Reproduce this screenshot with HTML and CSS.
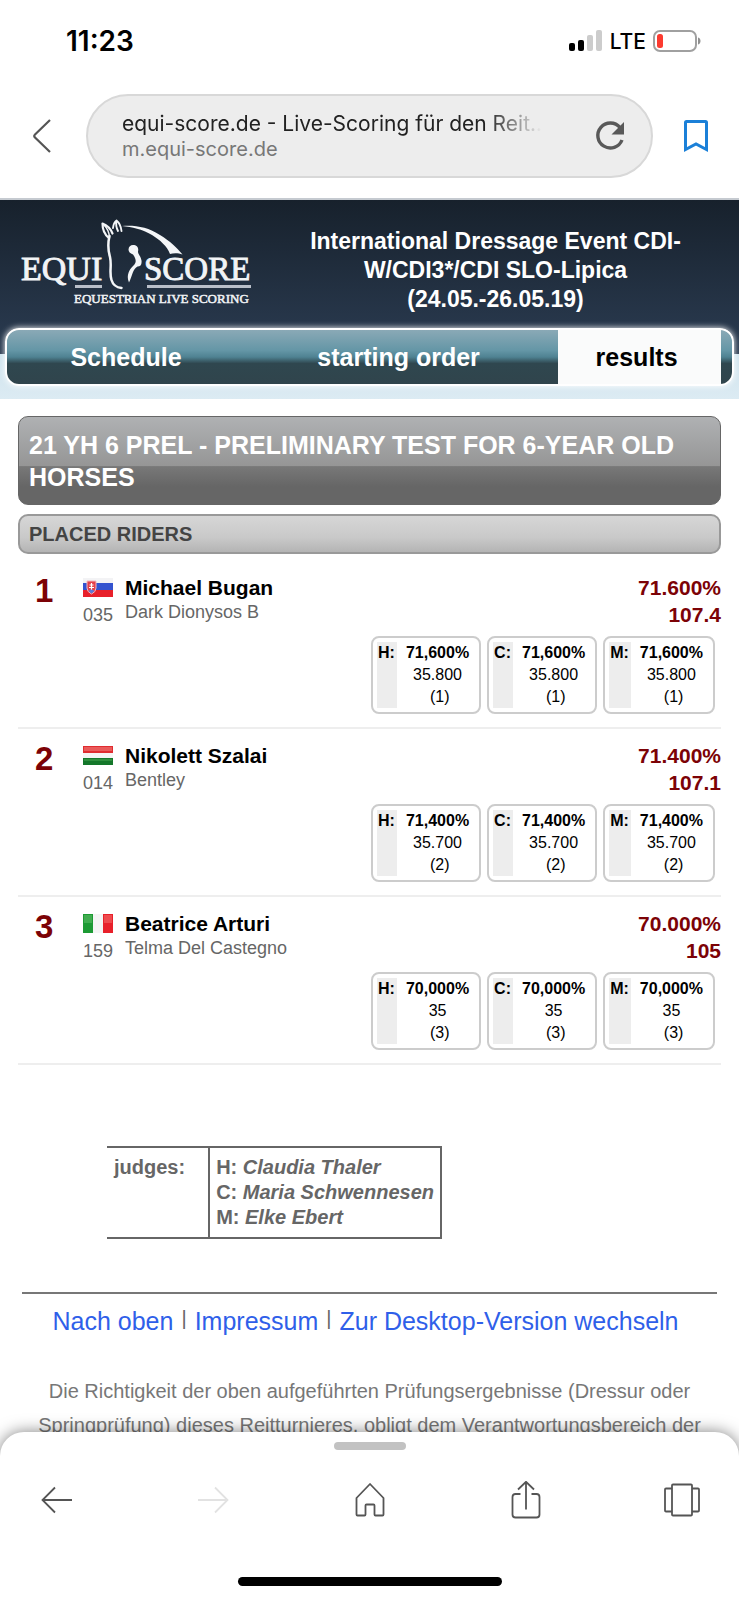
FILE: index.html
```html
<!DOCTYPE html>
<html lang="de">
<head>
<meta charset="utf-8">
<meta name="viewport" content="width=device-width, initial-scale=1">
<title>equi-score.de - Live-Scoring</title>
<link rel="stylesheet" href="styles.css">
</head>
<body>
<div class="phone">
  <div class="chrome">
    <div class="status">
      <span class="clock">11:23</span>
      <div class="status-right">
        <svg width="34" height="22" viewBox="0 0 34 22" aria-hidden="true">
          <rect x="0" y="13" width="6" height="8" rx="2" fill="#000"/>
          <rect x="9" y="10" width="6" height="11" rx="2" fill="#000"/>
          <rect x="18" y="5" width="6" height="16" rx="2" fill="#ccc"/>
          <rect x="27" y="0" width="6" height="21" rx="2" fill="#ccc"/>
        </svg>
        <span class="lte">LTE</span>
        <svg width="48" height="22" viewBox="0 0 48 22" aria-hidden="true">
          <rect x="1" y="1" width="42" height="20" rx="6" fill="none" stroke="#a0a0a0" stroke-width="2"/>
          <rect x="4" y="4" width="6" height="14" rx="2.500" fill="#fc3b30"/>
          <path d="M45 7.500c2 .6 2.500 2 2.500 3.500s-.5 2.900-2.500 3.500z" fill="#8f8f8f"/>
        </svg>
      </div>
    </div>
    <div class="address-row">
      <button class="icon-btn" type="button" aria-label="Zurück">
        <svg width="20" height="36" viewBox="0 0 20 36"><path d="M18 2 3 16.500q-1.500 1.500 0 3L18 34" fill="none" stroke="#555" stroke-width="2.200"/></svg>
      </button>
      <div class="address">
        <div class="address-text">
          <span class="page-title">equi-score.de - Live-Scoring für den Reit..</span>
          <span class="page-host">m.equi-score.de</span>
        </div>
        <button class="icon-btn" type="button" aria-label="Neu laden">
          <svg width="32" height="32" viewBox="0 0 32 32">
            <path d="M26 7.500A12.500 12.500 0 1 0 28 20" fill="none" stroke="#595959" stroke-width="3.400"/>
            <path d="M30 2v12.500H17.500z" fill="#595959"/>
          </svg>
        </button>
      </div>
      <button class="icon-btn bookmark" type="button" aria-label="Lesezeichen">
        <svg width="26" height="34" viewBox="0 0 26 34"><path d="M2.500 3.500q0-1 1-1h19q1 0 1 1v27L13 25 2.500 30.500z" fill="none" stroke="#1b80d8" stroke-width="3"/></svg>
      </button>
    </div>
  </div>

  <div class="site">
    <header class="site-head">
      <div class="banner">
        <svg class="logo" width="236" height="95" viewBox="0 0 236 95" role="img" aria-label="EQUI SCORE">
          <g fill="#f2f4f6" stroke="#f2f4f6" font-family="'Liberation Serif', serif">
            <text x="1" y="65" font-size="34" stroke-width=".9">EQUI</text>
            <text x="124" y="65" font-size="33" stroke-width=".9">SCORE</text>
            <text x="54" y="88" font-size="13" stroke-width=".5">EQUESTRIAN LIVE SCORING</text>
          </g>
          <path d="M55 71.500h27M127 71.500h104" stroke="#b9bfc9" stroke-width="3"/>
          <g fill="none" stroke="#f4f6f8" stroke-linecap="round" stroke-linejoin="round">
            <path d="M89 23c-4-3-6.500-8-6.500-14.500 4 1.500 8 5 10 10" stroke-width="2.200"/>
            <path d="M84 10c3 3 5 7 5.500 12" stroke-width="1.500"/>
            <path d="M93 13c.5-4 1.800-6.500 3.500-7.500 2.500 2 4.500 6 5 10.500M96.500 6c-1 4 0 7 1.500 10" stroke-width="1.900"/>
            <path d="M89.500 21c-2 8-1.500 14 .5 21 2 9-1 15 1.500 23 1.500 5 5 7.500 10 8" stroke-width="2.500"/>
          </g>
          <path d="M102 11c13-1 26 1 38 9 10 6 17 13 22.500 19.500-4-1.500-9-1.500-12.500-.5-3-8-10-14-18-19-10-6-20-8-30-9z" fill="#f4f6f8"/>
          <path d="M113 30c4 0 6 3 5 6.500 0 3 2.500 4 3.500 9 .5 4-1 6-4 6-5 3-5 9-8.500 16-3-6 0-13 4.500-17 3-3 3-6-.5-11-3-1-4.500-3-4.500-5 .2-3 2-4.500 4.500-4.500z" fill="#f4f6f8"/>
        </svg>
        <h1 class="event">International Dressage Event CDI-W/CDI3*/CDI SLO-Lipica<br>(24.05.-26.05.19)</h1>
      </div>
      <nav class="tabs">
        <a href="#schedule">Schedule</a>
        <a href="#starting">starting order</a>
        <a href="#results" class="active" aria-current="page">results</a>
      </nav>
    </header>

    <main class="content" id="results">
      <h2 class="test-title">21 YH 6 PREL - PRELIMINARY TEST FOR 6-YEAR OLD HORSES</h2>
      <h3 class="section-title">PLACED RIDERS</h3>
      <ol class="riders">
        <li class="rider">
          <span class="rank">1</span>
          <div class="entry">
            <svg width="30" height="19" viewBox="0 0 30 19" role="img" aria-label="Slowakei">
              <rect width="30" height="19" fill="#f3f3f5"/><rect y="5" width="30" height="8" fill="#3453cf"/><rect y="12" width="30" height="7" fill="#e8202a"/>
              <path d="M4 3h9v7q0 4-4.500 6Q4 14 4 10z" fill="#e5404a" stroke="#f3b6bd"/><path d="M8.500 5v7M6.500 7h4M6 9.500h5" stroke="#fff" stroke-width="1.200"/><path d="M5.500 13q3-3 6 0l-3 2.500z" fill="#5d78d8"/>
            </svg>
            <span>035</span>
          </div>
          <div class="who"><strong>Michael Bugan</strong><span>Dark Dionysos B</span></div>
          <div class="score"><span>71.600%</span><span>107.4</span></div>
          <div class="marks">
            <div class="mark"><b>H:</b><div><strong>71,600%</strong><span>35.800</span><span>&nbsp;(1)</span></div></div>
            <div class="mark"><b>C:</b><div><strong>71,600%</strong><span>35.800</span><span>&nbsp;(1)</span></div></div>
            <div class="mark"><b>M:</b><div><strong>71,600%</strong><span>35.800</span><span>&nbsp;(1)</span></div></div>
          </div>
        </li>
        <li class="rider">
          <span class="rank">2</span>
          <div class="entry">
            <svg width="30" height="19" viewBox="0 0 30 19" role="img" aria-label="Ungarn">
              <rect width="30" height="19" fill="#f5f5f5"/><rect width="30" height="7" fill="#e02c30"/><rect x="1" y="1" width="28" height="4" fill="#ea5a5a"/><rect y="12" width="30" height="7" fill="#14772a"/><rect x="1" y="13" width="28" height="2" fill="#2f8f3e"/>
            </svg>
            <span>014</span>
          </div>
          <div class="who"><strong>Nikolett Szalai</strong><span>Bentley</span></div>
          <div class="score"><span>71.400%</span><span>107.1</span></div>
          <div class="marks">
            <div class="mark"><b>H:</b><div><strong>71,400%</strong><span>35.700</span><span>&nbsp;(2)</span></div></div>
            <div class="mark"><b>C:</b><div><strong>71,400%</strong><span>35.700</span><span>&nbsp;(2)</span></div></div>
            <div class="mark"><b>M:</b><div><strong>71,400%</strong><span>35.700</span><span>&nbsp;(2)</span></div></div>
          </div>
        </li>
        <li class="rider">
          <span class="rank">3</span>
          <div class="entry">
            <svg width="30" height="19" viewBox="0 0 30 19" role="img" aria-label="Italien">
              <rect width="30" height="19" fill="#f4f4f4"/><rect width="10" height="19" fill="#1d9a34"/><rect x="1" y="1" width="8" height="8" fill="#41ad50"/><rect x="20" width="10" height="19" fill="#e8202a"/><rect x="21" y="1" width="8" height="8" fill="#ee4a4e"/>
            </svg>
            <span>159</span>
          </div>
          <div class="who"><strong>Beatrice Arturi</strong><span>Telma Del Castegno</span></div>
          <div class="score"><span>70.000%</span><span>105</span></div>
          <div class="marks">
            <div class="mark"><b>H:</b><div><strong>70,000%</strong><span>35</span><span>&nbsp;(3)</span></div></div>
            <div class="mark"><b>C:</b><div><strong>70,000%</strong><span>35</span><span>&nbsp;(3)</span></div></div>
            <div class="mark"><b>M:</b><div><strong>70,000%</strong><span>35</span><span>&nbsp;(3)</span></div></div>
          </div>
        </li>
      </ol>

      <table class="judges">
        <tr>
          <th scope="row">judges:</th>
          <td>H: <i>Claudia Thaler</i><br>C: <i>Maria Schwennesen</i><br>M: <i>Elke Ebert</i></td>
        </tr>
      </table>

      <footer class="site-foot">
        <div class="links">
          <a href="#top">Nach oben</a><span>|</span><a href="#impressum">Impressum</a><span>|</span><a href="#desktop">Zur Desktop-Version wechseln</a>
        </div>
        <p>Die Richtigkeit der oben aufgeführten Prüfungsergebnisse (Dressur oder Springprüfung) dieses Reitturnieres, obligt dem Verantwortungsbereich der</p>
      </footer>
    </main>
  </div>

  <div class="sheet">
    <div class="handle"></div>
    <div class="tools">
      <button class="icon-btn" type="button" aria-label="Zurück">
        <svg width="32" height="38" viewBox="0 0 32 38"><path d="M14 6.500 1.500 19 14 31.500M1.500 19H31" fill="none" stroke="#555" stroke-width="1.800"/></svg>
      </button>
      <button class="icon-btn" type="button" aria-label="Vorwärts" disabled>
        <svg width="32" height="38" viewBox="0 0 32 38"><path d="M18 6.500 30.500 19 18 31.500M30.500 19H1" fill="none" stroke="#e2e2e2" stroke-width="1.800"/></svg>
      </button>
      <button class="icon-btn" type="button" aria-label="Startseite">
        <svg width="30" height="38" viewBox="0 0 30 38"><path d="M1.500 17 15 3l13.500 14v16.500q0 1-1 1h-7q-1 0-1-1V24.500q0-1-1-1h-7q-1 0-1 1v9q0 1-1 1h-7q-1 0-1-1z" fill="none" stroke="#555" stroke-width="1.800" stroke-linejoin="round"/></svg>
      </button>
      <button class="icon-btn" type="button" aria-label="Teilen">
        <svg width="30" height="38" viewBox="0 0 30 38"><path d="M9.500 13h-5q-3 0-3 3v17.500q0 3 3 3h21q3 0 3-3V16q0-3-3-3h-5M15 28.500V1M7 8.500 15 .8l8 7.700" fill="none" stroke="#555" stroke-width="1.800"/></svg>
      </button>
      <button class="icon-btn" type="button" aria-label="Tabs">
        <svg width="36" height="38" viewBox="0 0 36 38"><path d="M9 3.500h18q1 0 1 1v29q0 1-1 1H9q-1 0-1-1v-29q0-1 1-1zM8 7.500H2q-1 0-1 1v21q0 1 1 1h6M28 7.500h6q1 0 1 1v21q0 1-1 1h-6" fill="none" stroke="#555" stroke-width="1.800"/></svg>
      </button>
    </div>
    <div class="home-bar"></div>
  </div>
</div>
</body>
</html>
```

FILE: styles.css
```css
* { box-sizing: border-box; }

body {
  margin: 0;
  background: #fff;
  color: #000;
  font-family: "Liberation Sans", Arial, sans-serif;
}

h1, h2, h3, p, ol { margin: 0; padding: 0; }

a { text-decoration: none; }

svg { display: block; }

.phone {
  display: grid;
  grid-template-rows: auto minmax(0, 1fr) auto;
  grid-template-columns: minmax(0, 1fr);
  height: 100vh;
}

.icon-btn {
  display: block;
  padding: 0;
  border: 0;
  background: none;
}

/* Browser chrome */
.chrome { font-family: Inter, sans-serif; }

.status {
  display: flex;
  align-items: center;
  justify-content: space-between;
  height: 94px;
  padding: 0 38px 12px 66px;
}

.clock {
  font-size: 28px;
  font-weight: 600;
}

.status-right {
  display: flex;
  align-items: center;
  gap: 7px;
}

.lte {
  font-size: 21px;
  font-weight: 500;
}

.address-row {
  display: flex;
  align-items: center;
  gap: 34px;
  padding: 0 30px 20px 32px;
}

.bookmark { margin-left: -4px; }

.address {
  display: flex;
  flex: 1;
  align-items: center;
  justify-content: space-between;
  min-width: 0;
  height: 84px;
  padding: 0 25px 0 34px;
  border: 2px solid #d8d8d8;
  border-radius: 42px;
  background: #ededed;
}

.address-text {
  display: flex;
  flex-direction: column;
  align-items: flex-start;
}

.page-title {
  font-size: 21px;
  line-height: 26px;
  white-space: nowrap;
  color: #222;
  -webkit-mask-image: linear-gradient(to left, transparent, #000 56px);
  mask-image: linear-gradient(to left, transparent, #000 56px);
}

.page-host {
  font-size: 20px;
  line-height: 24px;
  color: #777;
}

/* Site header */
.site { margin-bottom: -24px; overflow: hidden; }

.site-head {
  padding: 0 5px 13px;
  border-top: 2px solid #c5cad0;
  background: linear-gradient(#17212c, #2b3c52 154px, #cfe3ed 154px, #dcebf3);
}

.banner {
  display: flex;
  align-items: flex-start;
  gap: 16px;
  padding: 15px 15px 14px 15px;
}

.logo { flex: none; }

.event {
  flex: 1;
  padding-top: 12px;
  font-size: 23px;
  line-height: 29px;
  text-align: center;
  color: #fff;
}

.tabs {
  display: grid;
  grid-template-columns: 19fr 25fr 13fr;
  padding-right: 11px;
  border: 2px solid #fff;
  border-radius: 14px;
  background: linear-gradient(#8aa9b6, #6496a6 38%, #4f8292 50%, #2f474f 62%, #30444c);
  box-shadow: 0 0 6px #fff;
}

.tabs a {
  font-size: 25px;
  font-weight: bold;
  line-height: 54px;
  text-align: center;
  color: #fff;
}

.tabs a + a { padding-right: 6px; }

.tabs .active {
  background: #fafbfb;
  color: #000;
}

/* Results */
.content { padding: 17px 18px 0; }

.test-title {
  padding: 12px 10px 11px;
  border: 1px solid #666;
  border-radius: 10px;
  background: linear-gradient(#afb1b3, #969696 56%, #787878 57%, #666 80%);
  font-size: 25px;
  line-height: 32px;
  color: #fff;
}

.section-title {
  margin-top: 9px;
  padding: 0 9px;
  border: 2px solid #999;
  border-radius: 10px;
  background: linear-gradient(#d6d6d6, #c9c9c9 60%, #b4b4b4);
  font-size: 20px;
  line-height: 36px;
  color: #444;
}

.riders {
  margin-top: 7px;
  list-style: none;
}

.rider {
  display: grid;
  grid-template-columns: 65px 42px 1fr auto;
  padding: 13px 0 13px;
  border-bottom: 2px solid #eee;
}

.rank {
  padding-left: 17px;
  font-size: 33px;
  font-weight: bold;
  line-height: 33px;
  color: #7c0206;
}

.entry {
  padding-top: 4px;
  font-size: 18px;
  line-height: 24px;
  color: #666;
}

.entry span {
  display: block;
  padding-top: 6px;
}

.who {
  display: flex;
  flex-direction: column;
  padding-top: 2px;
  font-size: 18px;
  line-height: 24px;
  color: #666;
}

.who strong {
  font-size: 21px;
  color: #000;
}

.score {
  display: flex;
  flex-direction: column;
  font-size: 21px;
  font-weight: bold;
  line-height: 27px;
  text-align: right;
  color: #7c0206;
}

.marks {
  display: flex;
  grid-column: 1 / -1;
  justify-content: flex-end;
  gap: 6px;
  padding: 8px 6px 0 0;
}

.mark {
  display: flex;
  padding: 4px;
  border: 2px solid #ccc;
  border-radius: 8px;
  font-size: 16px;
  line-height: 22px;
}

.mark b {
  padding: 0 2px 0 1px;
  background: #ededed;
}

.mark div {
  display: flex;
  flex-direction: column;
  padding: 0 6px 0 9px;
  text-align: center;
}

/* Judges and footer */
.judges {
  margin: 81px 0 0 89px;
  border-top: 2px solid #666;
  border-bottom: 2px solid #666;
  border-spacing: 0;
  font-size: 20px;
  font-weight: bold;
  line-height: 25px;
  color: #666;
}

.judges th {
  padding: 7px 23px 7px 7px;
  vertical-align: top;
}

.judges td {
  padding: 7px 6px;
  border: solid #666;
  border-width: 0 2px;
}

.site-foot {
  margin: 53px 4px 0;
  border-top: 2px solid #777;
  text-align: center;
}

.links {
  display: flex;
  align-items: flex-start;
  justify-content: center;
  gap: 8px;
  padding: 11px 8px 0 0;
  font-size: 25px;
  line-height: 32px;
}

.links a { color: #2f5fe9; }

.links span {
  font-size: 20px;
  line-height: 26px;
  color: #666;
}

.site-foot p {
  padding: 37px 8px 0;
  font-size: 20px;
  line-height: 34px;
  color: #777;
}

/* Bottom sheet */
.sheet {
  z-index: 1;
  display: flex;
  flex-direction: column;
  align-items: center;
  justify-content: space-between;
  height: 168px;
  padding: 10px 0 14px;
  border-radius: 24px 24px 0 0;
  background: #fff;
  box-shadow: 0 0 16px rgba(0, 0, 0, .5);
}

.handle {
  width: 72px;
  height: 8px;
  border-radius: 4px;
  background: #c2c2c2;
}

.tools {
  display: grid;
  grid-template-columns: repeat(5, 36px);
  justify-content: space-between;
  justify-items: center;
  width: 100%;
  margin-bottom: 28px;
  padding: 0 39px;
}

.home-bar {
  width: 264px;
  height: 9px;
  border-radius: 5px;
  background: #000;
}
```
